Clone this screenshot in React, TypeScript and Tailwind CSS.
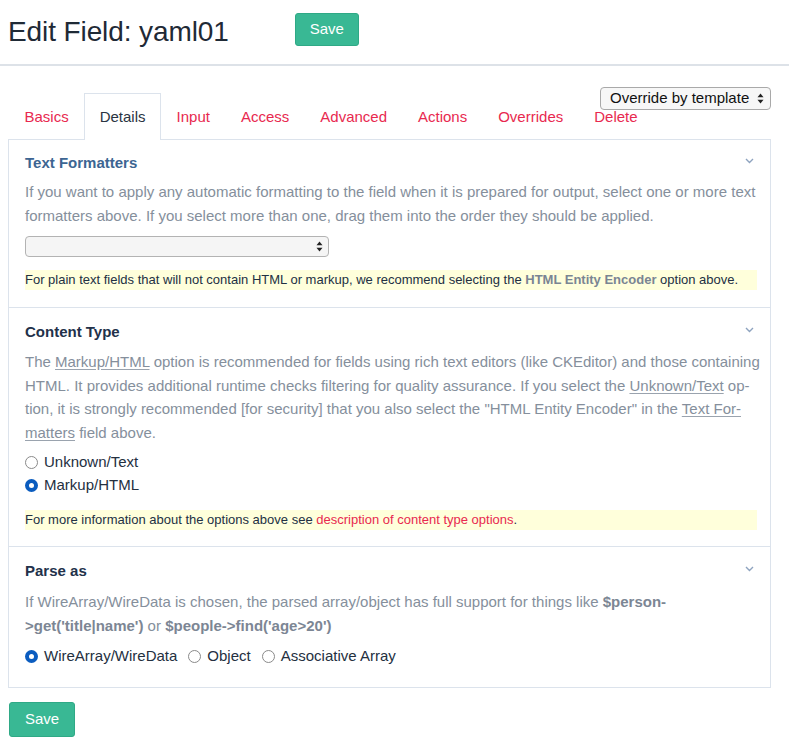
import React from "react";

const tabs = ["Basics", "Details", "Input", "Access", "Advanced", "Actions", "Overrides", "Delete"];

function Arrows({ className = "" }: { className?: string }) {
  return (
    <svg width="7" height="11" viewBox="0 0 7 11" className={className}>
      <path d="M3.5 0.5 L6.5 4.2 L0.5 4.2 Z" fill="#222" />
      <path d="M3.5 10.5 L6.5 6.8 L0.5 6.8 Z" fill="#222" />
    </svg>
  );
}

function Chevron() {
  return (
    <svg width="9" height="6" viewBox="0 0 9 6" className="mt-[6px]">
      <path d="M1 1 L4.5 4.5 L8 1" fill="none" stroke="#8ea3bf" strokeWidth="1.4" />
    </svg>
  );
}

function Radio({ checked, label }: { checked?: boolean; label: string }) {
  return (
    <label className="flex items-center gap-[6px] h-[23px] text-[15px] text-[#24303f]">
      {checked ? (
        <span className="w-[13px] h-[13px] rounded-full bg-[#0b5cbf] flex items-center justify-center">
          <span className="w-[5px] h-[5px] rounded-full bg-white" />
        </span>
      ) : (
        <span className="w-[13px] h-[13px] rounded-full border border-[#8a8a8a] bg-white" />
      )}
      <span>{label}</span>
    </label>
  );
}

function Note({ children }: { children: React.ReactNode }) {
  return (
    <div className="w-[732px] h-[20px] bg-[#ffffdb] text-[13px] leading-[20px] text-[#223043] whitespace-nowrap">
      {children}
    </div>
  );
}

function Heading({ children, blue }: { children: React.ReactNode; blue?: boolean }) {
  return (
    <div className="flex justify-between items-start">
      <h3 className={`text-[15px] leading-[22px] font-bold ${blue ? "text-[#3c6592]" : "text-[#22314a]"}`}>{children}</h3>
      <Chevron />
    </div>
  );
}

const u = "underline decoration-[#9aa3ae] underline-offset-2";

export default function App() {
  return (
    <div className="min-h-[750px] bg-white text-[#27313d]" style={{ fontFamily: '"Liberation Sans", Arial, sans-serif' }}>
      {/* header */}
      <div className="h-[64px] flex items-center px-2 pb-[6px]">
        <h1 className="text-[28px] leading-none text-[#1f2a36] mt-[5px] tracking-[-0.1px]">Edit Field: yaml01</h1>
        <button className="ml-[66px] w-[64px] h-[33px] rounded-[3px] bg-[#39b894] text-white text-[15px] border border-[#2fa986]">
          Save
        </button>
      </div>
      <div className="h-[2px] bg-[#dde2e8]" />

      <div className="ml-2 w-[763px]">
        {/* tabs */}
        <div className="relative mt-[27px] flex pl-[1px]">
          {tabs.map((t) => (
            <div
              key={t}
              className={
                t === "Details"
                  ? "px-[14.5px] h-[47px] leading-[45px] text-[15px] text-[#2a3442] bg-white border border-b-0 border-[#dce3ec] -mb-[1px] relative z-10"
                  : "px-[14.5px] h-[46px] leading-[45px] text-[15px] text-[#e8294f] border border-transparent"
              }
            >
              {t}
            </div>
          ))}
          <div className="absolute right-0 -top-[6px] w-[171px] h-[23px] rounded-[4px] border border-[#a9a9a9] bg-[#f7f7f7] flex items-center justify-between pl-[9px] pr-[6px] text-[15px] text-[#111] z-20">
            <span>Override by template</span>
            <Arrows />
          </div>
        </div>

        {/* panel */}
        <div className="border border-[#dce3ec]">
          {/* Text Formatters */}
          <section className="px-4 pt-[12px] pb-[17px] border-b border-[#dce3ec]">
            <Heading blue>Text Formatters</Heading>
            <p className="mt-[6px] text-[15px] leading-[24px] text-[#858f9c] whitespace-nowrap">
              If you want to apply any automatic formatting to the field when it is prepared for output, select one or more text
              <br />
              formatters above. If you select more than one, drag them into the order they should be applied.
            </p>
            <div className="mt-[8px] w-[304px] h-[21px] rounded-[4px] border border-[#b3b3b3] bg-[#f5f5f5] flex items-center justify-end pr-[5px]">
              <Arrows />
            </div>
            <div className="mt-[13px]">
              <Note>
                For plain text fields that will not contain HTML or markup, we recommend selecting the{" "}
                <b className="text-[#7a8593]">HTML Entity Encoder</b> option above.
              </Note>
            </div>
          </section>

          {/* Content Type */}
          <section className="px-4 pt-[13px] pb-4 border-b border-[#dce3ec]">
            <Heading>Content Type</Heading>
            <p className="mt-[7px] text-[15px] leading-[23.5px] text-[#858f9c] whitespace-nowrap">
              The <span className={u}>Markup/HTML</span> option is recommended for fields using rich text editors (like CKEditor) and those containing
              <br />
              HTML. It provides additional runtime checks filtering for quality assurance. If you select the{" "}
              <span className={u}>Unknown/Text</span> op-
              <br />
              tion, it is strongly recommended [for security] that you also select the "HTML Entity Encoder" in the{" "}
              <span className={u}>Text For-</span>
              <br />
              <span className={u}>matters</span> field above.
            </p>
            <div className="mt-[7px] flex flex-col">
              <Radio label="Unknown/Text" />
              <Radio checked label="Markup/HTML" />
            </div>
            <div className="mt-[13px]">
              <Note>
                For more information about the options above see{" "}
                <span className="text-[#e8294f]">description of content type options</span>.
              </Note>
            </div>
          </section>

          {/* Parse as */}
          <section className="px-4 pt-[13px] pb-[19px]">
            <Heading>Parse as</Heading>
            <p className="mt-[8px] text-[15px] leading-[24px] text-[#858f9c] whitespace-nowrap">
              If WireArray/WireData is chosen, the parsed array/object has full support for things like <b className="text-[#7c8694]">$person-</b>
              <br />
              <b className="text-[#7c8694]">&gt;get('title|name')</b> or <b className="text-[#7c8694]">$people-&gt;find('age&gt;20')</b>
            </p>
            <div className="mt-[7px] flex gap-[11px]">
              <Radio checked label="WireArray/WireData" />
              <Radio label="Object" />
              <Radio label="Associative Array" />
            </div>
          </section>
        </div>

        <button className="mt-[14px] ml-[1px] w-[66px] h-[35px] rounded-[3px] bg-[#39b894] text-white text-[15px] border border-[#2fa986]">
          Save
        </button>
      </div>
    </div>
  );
}
